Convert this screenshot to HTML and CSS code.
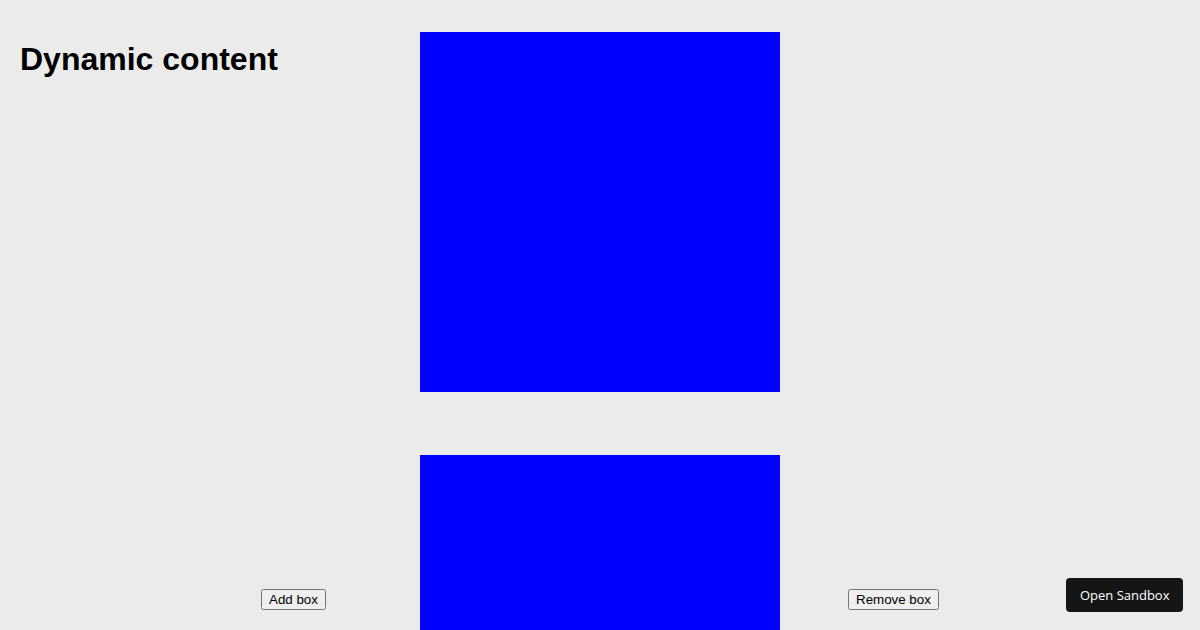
FILE: index.html
```html
<!DOCTYPE html>
<html lang="en">
<head>
<meta charset="utf-8">
<title>Dynamic content</title>
<link rel="stylesheet" href="styles.css">
</head>
<body>
<div class="page">
  <section class="side side-left">
    <h1 class="title">Dynamic content</h1>
    <div class="controls controls-left">
      <button class="btn" type="button">Add box</button>
    </div>
  </section>
  <section class="stack">
    <div class="box"></div>
    <div class="box"></div>
  </section>
  <section class="side side-right">
    <div class="controls controls-right">
      <button class="btn" type="button">Remove box</button>
    </div>
  </section>
</div>
<a class="sandbox" href="#">Open Sandbox</a>
</body>
</html>
```
FILE: styles.css
```css
html, body {
  margin: 0;
  padding: 0;
  background: #ebebeb;
  height: 100%;
  overflow: hidden;
}
body {
  font-family: "Liberation Sans", Arial, sans-serif;
  color: #000;
}
.page {
  display: grid;
  grid-template-columns: 420px 360px 1fr;
  height: 630px;
}
.side {
  display: flex;
  flex-direction: column;
  padding: 20px 0 20px 0;
  box-sizing: border-box;
  height: 630px;
}
.side-left {
  padding-left: 20px;
}
.title {
  font-family: "Liberation Sans", Arial, sans-serif;
  font-size: 32px;
  font-weight: bold;
  margin: 21.44px 0;
}
.controls {
  margin-top: auto;
  display: flex;
}
.controls-left {
  padding-left: 241px;
}
.controls-right {
  padding-left: 68px;
}
.btn {
  font: 13.333px "Liberation Sans", Arial, sans-serif;
}
.stack {
  display: flex;
  flex-direction: column;
  gap: 63px;
  padding-top: 32px;
  overflow: hidden;
}
.box {
  width: 360px;
  height: 360px;
  flex: none;
  background: #0000ff;
}
.sandbox {
  position: fixed;
  right: 17px;
  bottom: 18px;
  background: #151515;
  color: #fff;
  text-decoration: none;
  font-family: "Open Sans", sans-serif;
  font-size: 13px;
  font-weight: 500;
  line-height: 18px;
  padding: 8px 13.5px;
  border-radius: 4px;
}
```
